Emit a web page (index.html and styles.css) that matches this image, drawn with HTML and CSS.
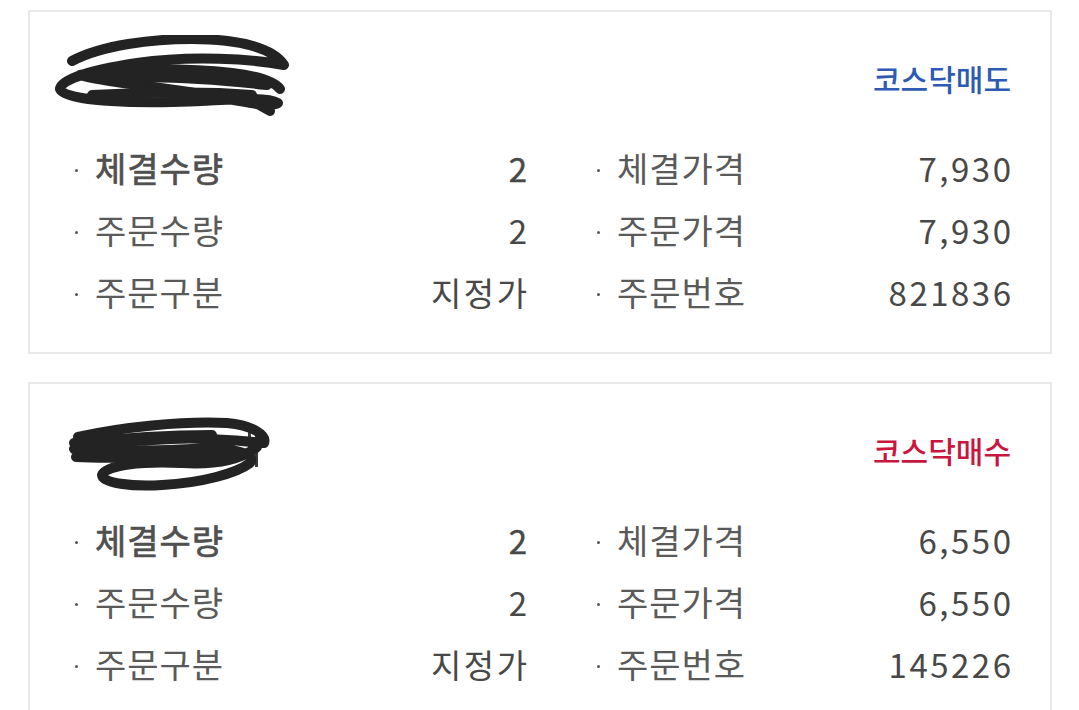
FILE: index.html
```html
<!DOCTYPE html>
<html lang="ko">
<head>
<meta charset="utf-8">
<link rel="stylesheet" href="styles.css">
</head>
<body>
<div class="list">
  <section class="card">
    <div class="head">
      <svg class="scribble" width="245" height="84" viewBox="0 0 245 84" aria-hidden="true">
        <g fill="none" stroke="#232323" stroke-width="10" stroke-linecap="round" stroke-linejoin="round">
          <path d="M20 26 C50 10 100 4 140 4 C190 4 222 14 232 30 C200 24 140 20 85 28 C45 34 8 44 8 54 C10 64 60 68 120 67 C170 66 212 60 226 68 C215 74 170 62 130 56 C90 50 45 46 28 40 C55 34 125 32 180 38 C205 41 222 46 228 54"/>
          <path d="M40 60 C80 58 150 56 200 60"/>
          <path d="M60 44 C100 40 160 44 215 50"/>
          <path d="M200 66 L218 76"/>
        </g>
      </svg>
      <span class="market sell">코스닥매도</span>
    </div>
    <div class="grid">
      <div class="row strong"><span class="label">체결수량</span><span class="val">2</span></div>
      <div class="row"><span class="label">체결가격</span><span class="val">7,930</span></div>
      <div class="row"><span class="label">주문수량</span><span class="val">2</span></div>
      <div class="row"><span class="label">주문가격</span><span class="val">7,930</span></div>
      <div class="row"><span class="label">주문구분</span><span class="val">지정가</span></div>
      <div class="row"><span class="label">주문번호</span><span class="val">821836</span></div>
    </div>
  </section>
  <section class="card">
    <div class="head">
      <svg class="scribble" width="245" height="84" viewBox="0 0 245 84" aria-hidden="true">
        <g fill="#3a3a3a">
          <rect x="196" y="20" width="3" height="40"/>
          <rect x="203" y="20" width="3" height="40"/>
        </g>
        <g fill="none" stroke="#232323" stroke-width="10" stroke-linecap="round" stroke-linejoin="round">
          <path d="M26 30 C70 20 130 14 175 16 C200 18 215 28 212 36 C190 34 150 30 120 32 C80 34 40 36 22 42 C40 46 90 44 140 42 C180 40 205 46 198 56 C185 66 150 76 110 78 C80 80 50 76 50 68 C54 58 90 54 130 56 C165 58 190 52 205 40"/>
          <path d="M22 36 C60 32 110 28 160 28"/>
          <path d="M24 50 C60 52 120 50 180 48"/>
        </g>
      </svg>
      <span class="market buy">코스닥매수</span>
    </div>
    <div class="grid">
      <div class="row strong"><span class="label">체결수량</span><span class="val">2</span></div>
      <div class="row"><span class="label">체결가격</span><span class="val">6,550</span></div>
      <div class="row"><span class="label">주문수량</span><span class="val">2</span></div>
      <div class="row"><span class="label">주문가격</span><span class="val">6,550</span></div>
      <div class="row"><span class="label">주문구분</span><span class="val">지정가</span></div>
      <div class="row"><span class="label">주문번호</span><span class="val">145226</span></div>
    </div>
  </section>
</div>
</body>
</html>
```

FILE: styles.css
```css
html, body {
  margin: 0;
  padding: 0;
  background: #ffffff;
}
body {
  font-family: "Noto Sans CJK KR", "Noto Sans", sans-serif;
  color: #4a4a4a;
  overflow: hidden;
}
.list {
  display: flex;
  flex-direction: column;
  gap: 28px;
  padding: 10px 27px 0 28px;
}
.card {
  border: 2px solid #e8e8e8;
  padding: 0 39px 29px 22px;
}
.head {
  display: flex;
  align-items: center;
  justify-content: space-between;
  height: 115px;
  padding-top: 10px;
}
.scribble {
  display: block;
  margin-top: -6px;
}
.market {
  font-size: 30px;
  font-weight: 500;
  line-height: 1;
  margin-bottom: 4px;
}
.sell { color: #2d5bb3; }
.buy { color: #c8163f; }
.grid {
  display: grid;
  grid-template-columns: 452px 1fr;
  column-gap: 70px;
  padding-left: 23px;
}
.row {
  display: flex;
  justify-content: space-between;
  align-items: center;
  height: 62px;
  font-size: 33px;
  line-height: 1;
}
.label {
  position: relative;
  padding-left: 20px;
  color: #5a5a5a;
  font-size: 34px;
  letter-spacing: 1px;
}
.label::before {
  content: "";
  position: absolute;
  left: 0;
  top: 52%;
  width: 3px;
  height: 3px;
  border-radius: 50%;
  background: #555;
}
.strong .label {
  color: #505050;
  -webkit-text-stroke: 0.7px #505050;
}
.strong .val {
  -webkit-text-stroke: 0.4px #484848;
}
.val {
  color: #484848;
  letter-spacing: 2.5px;
  margin-right: -2.5px;
}
```
